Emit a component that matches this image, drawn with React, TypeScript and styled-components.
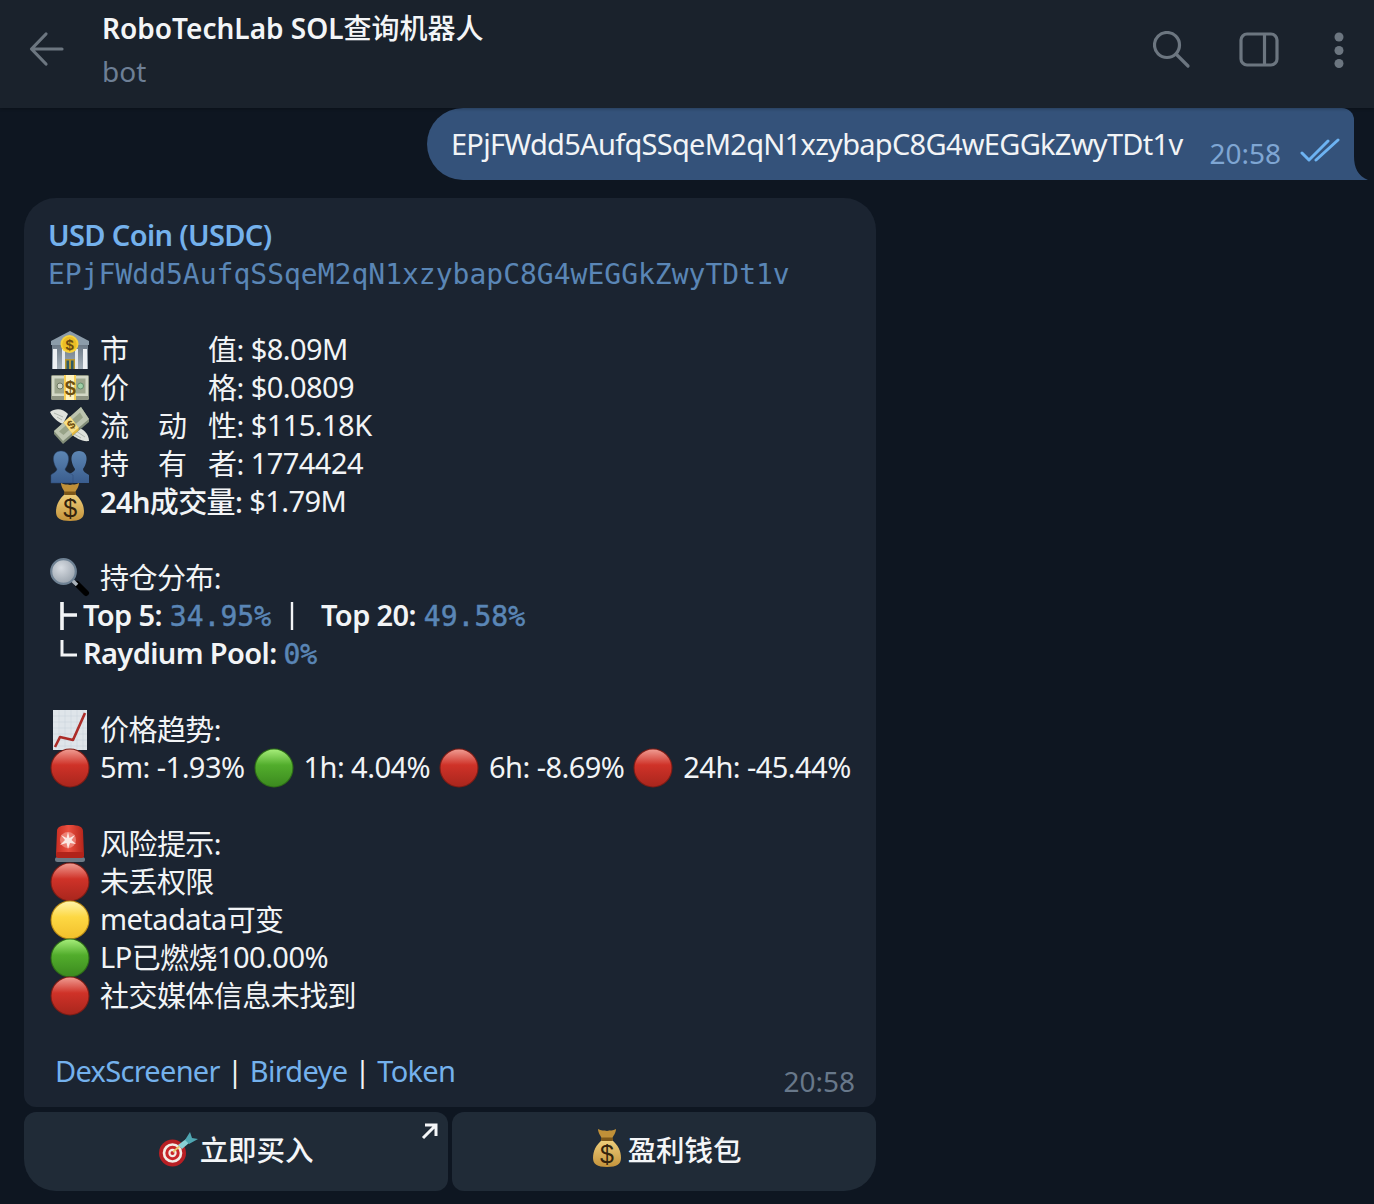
import { ReactNode } from 'react';
import styled, { createGlobalStyle } from 'styled-components';

const GlobalStyle = createGlobalStyle`
    html, body {
        margin: 0;
        padding: 0;
        background: #0e1621;
    }
    body {
        font-family: "Noto Sans", "Noto Sans CJK SC", sans-serif;
        color: #f2f4f6;
    }
`;

type BallKind = 'red' | 'green' | 'yellow';

const ballColors: Record<BallKind, [string, string, string, string]> = {
    red: ['#ef9a90', '#cf3228', '#a9261d', '#7d1c15'],
    green: ['#a4ec78', '#52ad2c', '#3c8a1f', '#2d6c17'],
    yellow: ['#fff3a8', '#fdd843', '#f2c02c', '#b98a14'],
};

function Ball({ kind }: { kind: BallKind }) {
    const [a, b, c, d] = ballColors[kind];
    const id = `ball-${kind}`;
    return (
        <svg viewBox="0 0 40 40" width="40" height="40">
            <defs>
                <linearGradient id={id} x1="0" y1="0" x2="0" y2="1">
                    <stop offset="0" stopColor={a} />
                    <stop offset="0.42" stopColor={b} />
                    <stop offset="1" stopColor={c} />
                </linearGradient>
            </defs>
            <circle cx="20" cy="20" r="19.5" fill={d} />
            <circle cx="20" cy="20" r="18.4" fill={`url(#${id})`} />
        </svg>
    );
}

function Bank() {
    return (
        <svg viewBox="0 0 40 40" width="40" height="40">
            <defs>
                <linearGradient id="bank-wall" x1="0" y1="0" x2="0" y2="1">
                    <stop offset="0" stopColor="#6d7a87" />
                    <stop offset="1" stopColor="#a5b1ba" />
                </linearGradient>
            </defs>
            <path d="M20 1 L39 11 V15 H1 V11 Z" fill="#8c9ca9" />
            <rect x="2" y="15" width="36" height="24" fill="url(#bank-wall)" />
            <rect x="3" y="19" width="4" height="20" fill="#eef1f3" />
            <rect x="12" y="19" width="3" height="20" fill="#e4e8eb" />
            <rect x="25" y="19" width="3" height="20" fill="#e4e8eb" />
            <rect x="33" y="19" width="4" height="20" fill="#eef1f3" />
            <rect x="15.500" y="30" width="9" height="9" fill="#2f5b66" />
            <path d="M15 29 h10 v10 h-1.500 v-8.500 h-2.500 v8.500 h-2 v-8.500 h-2.500 v8.500 h-1.500 Z" fill="#b9982f" />
            <circle cx="19.500" cy="14" r="9" fill="#f7d23c" />
            <circle cx="19.500" cy="14" r="7.200" fill="#ecbd25" />
            <text x="19.500" y="19.500" textAnchor="middle" fontSize="15" fontWeight="700" fontFamily="Liberation Sans, sans-serif" fill="#6b4c10">$</text>
        </svg>
    );
}

function Banknotes() {
    return (
        <svg viewBox="0 0 40 40" width="40" height="40">
            <rect x="1" y="7" width="38" height="25" rx="1.500" fill="#8f9583" />
            <rect x="2" y="8" width="36" height="20" fill="#d3d8c6" />
            <rect x="4.500" y="10.500" width="31" height="15" fill="#9ea78e" />
            <circle cx="10" cy="18" r="3" fill="#d3d8c6" stroke="#6f7963" />
            <circle cx="30.500" cy="18" r="3" fill="#9ed0a6" stroke="#628d6b" />
            <rect x="14" y="7" width="12" height="25" fill="#f8cf55" />
            <rect x="16" y="7" width="8" height="25" fill="#fdf2c0" />
            <text x="20" y="26.500" textAnchor="middle" fontSize="20" fontWeight="700" fontFamily="Liberation Sans, sans-serif" fill="#6f5010">$</text>
        </svg>
    );
}

function MoneyWings() {
    return (
        <svg viewBox="0 0 40 40" width="40" height="40">
            <path d="M0 6 C5 2 13 2 18 8 L13 18 C8 16 3 12 0 6 Z" fill="#dfe2dc" />
            <path d="M4 7 L13 11 M7 11 L12 14" stroke="#a5ada3" strokeWidth="0.800" fill="none" />
            <path d="M39 35 C39 28 33 22 26 21 L21 28 C26 32 32 36 39 35 Z" fill="#dfe2dc" />
            <path d="M35 31 L26 25 M31 32 L24 28" stroke="#a5ada3" strokeWidth="0.800" fill="none" />
            <path d="M4 25 L31 1 L39 13 L39 16 L13 38 L4 28 Z" fill="#828d78" />
            <path d="M4 25 L31 1 L39 13 L13 35 Z" fill="#bcc4af" />
            <path d="M9 25.500 L30 6.500 L33 11.500 L13.500 29 Z" fill="#98a388" />
            <path d="M13.500 16.600 L20 10.600 L28.600 21.800 L28.600 24.500 L22 30 L22 27.300 Z" fill="#e4b93f" />
            <path d="M13.500 16.600 L20 10.600 L28.600 21.800 L22 27.300 Z" fill="#f9df85" />
            <text x="21" y="23" textAnchor="middle" fontSize="12" fontWeight="700" fontFamily="Liberation Sans, sans-serif" fill="#6f5010" transform="rotate(-40 21 19)">$</text>
        </svg>
    );
}

function Busts() {
    return (
        <svg viewBox="0 0 40 40" width="40" height="40">
            <defs>
                <linearGradient id="bust-fill" x1="0" y1="0" x2="0" y2="1">
                    <stop offset="0" stopColor="#5d86b3" />
                    <stop offset="1" stopColor="#3a5d8e" />
                </linearGradient>
            </defs>
            <path d="M29 7 C23.500 7 21 11 21.500 16 C22 20 23.500 23 25 25 C25 27.500 21 29 17 31 V39 H39 V31 C35.500 29 33 27.500 33 25 C34.500 23 36 20 36.500 16 C37 11 34.500 7 29 7 Z" fill="url(#bust-fill)" />
            <path d="M11 7 C5.500 7 3 11 3.500 16 C4 20 5.500 23 7 25 C7 27.500 3.500 29 1 31 V39 H23 V31 C19.500 29 15 27.500 15 25 C16.500 23 18 20 18.500 16 C19 11 16.500 7 11 7 Z" fill="url(#bust-fill)" stroke="#2c4a75" strokeWidth="0.500" />
        </svg>
    );
}

function MoneyBag() {
    return (
        <svg viewBox="0 0 40 40" width="40" height="40">
            <defs>
                <linearGradient id="bag-fill" x1="0" y1="0" x2="0" y2="1">
                    <stop offset="0" stopColor="#efcf7c" />
                    <stop offset="1" stopColor="#c4933b" />
                </linearGradient>
            </defs>
            <path d="M11 1 C14 3 17 2 20 3 C23 2 26 3 29 1 C29 5 26 8 25 11 H15 C14 8 11 5 11 1 Z" fill="#c09038" />
            <path d="M15 12 C9 17 6 23 6 30 C6 36 10 39 20 39 C30 39 34 36 34 30 C34 23 31 17 25 12 Z" fill="url(#bag-fill)" />
            <rect x="14" y="9.500" width="12" height="3.500" rx="1.500" fill="#7d5719" />
            <text x="20" y="35" textAnchor="middle" fontSize="25" fontWeight="400" fontFamily="Liberation Sans, sans-serif" fill="#33230d">$</text>
        </svg>
    );
}

function Magnifier() {
    return (
        <svg viewBox="0 0 40 40" width="40" height="40">
            <defs>
                <radialGradient id="lens-fill" cx="0.4" cy="0.35" r="0.8">
                    <stop offset="0" stopColor="#d8dde3" />
                    <stop offset="1" stopColor="#8e98a3" />
                </radialGradient>
            </defs>
            <path d="M27 26 L36 35" stroke="#000" strokeWidth="6" strokeLinecap="round" />
            <path d="M22 22 L27 27" stroke="#aab2ba" strokeWidth="3.500" />
            <circle cx="13.500" cy="13.500" r="12.300" fill="url(#lens-fill)" stroke="#6f8294" strokeWidth="2.200" />
        </svg>
    );
}

function ChartUp() {
    return (
        <svg viewBox="0 0 40 40" width="40" height="40">
            <rect x="3" y="0" width="34" height="40" fill="#dfe5ea" />
            <path d="M3 6 H37 M3 12 H37 M3 18 H37 M3 24 H37 M3 30 H37 M3 36 H37 M9 0 V40 M15 0 V40 M21 0 V40 M27 0 V40 M33 0 V40" stroke="#c7d0d8" strokeWidth="0.500" fill="none" />
            <path d="M5 37 L10 27 L23 30 L35 3" stroke="#ac2c28" strokeWidth="2.600" fill="none" strokeLinejoin="round" />
        </svg>
    );
}

function Siren() {
    return (
        <svg viewBox="0 0 40 40" width="40" height="40">
            <defs>
                <linearGradient id="siren-fill" x1="0" y1="0" x2="1" y2="0">
                    <stop offset="0" stopColor="#c92d22" />
                    <stop offset="0.45" stopColor="#ea5040" />
                    <stop offset="1" stopColor="#b4241a" />
                </linearGradient>
            </defs>
            <path d="M6 31 L7 7 C7 3 11 1 20 1 C29 1 33 3 33 7 L34 31 Z" fill="url(#siren-fill)" />
            <circle cx="18" cy="16" r="8" fill="#f7a79c" opacity="0.6" />
            <path d="M18 8 L19.500 14 L25 11 L21.500 16 L26 20 L20 19 L18 25 L16.500 19 L10 21 L15 16 L11 11 L16.500 14 Z" fill="#fbe8e3" />
            <rect x="5" y="33" width="30" height="5" rx="2.500" fill="#6c7a86" />
            <rect x="6" y="28" width="28" height="6" rx="2" fill="#b1231a" />
        </svg>
    );
}

function Dart() {
    return (
        <svg viewBox="0 0 40 40" width="40" height="40">
            <circle cx="13.500" cy="25" r="13.500" fill="#b81f24" />
            <circle cx="13.500" cy="25" r="9.800" fill="#f3ece6" />
            <circle cx="13.500" cy="25" r="7.200" fill="#c9252a" />
            <circle cx="13.500" cy="25" r="4.200" fill="#f3ece6" />
            <circle cx="13.500" cy="25" r="2" fill="#c9252a" />
            <path d="M14 24 L22 17" stroke="#e8c66a" strokeWidth="1.800" />
            <path d="M19 17 L27 11 L30 15 L23 21 Z" fill="#8ad0d6" />
            <path d="M26 12 L31 4 L33 10 L39 11 L30 16 Z" fill="#4fa6b2" />
        </svg>
    );
}

const PageShell = styled.div`
    width: 1374px;
    height: 1204px;
    display: flex;
    flex-direction: column;
    overflow: hidden;
    background: #0e1621;
`;

const TopBar = styled.header`
    position: relative;
    z-index: 1;
    height: 108px;
    flex: none;
    box-sizing: border-box;
    display: flex;
    align-items: center;
    padding: 0 29px 10px 28px;
    background: #1a222c;
    box-shadow: 0 1px 3px rgba(0, 0, 0, 0.25);
`;

const BackIcon = styled.svg`
    width: 38px;
    height: 38px;
    margin-right: 36px;
    flex: none;
`;

const TitleBlock = styled.div`
    flex: 1;
    display: flex;
    flex-direction: column;
    gap: 3px;
`;

const Title = styled.div`
    font-size: 28px;
    line-height: 40px;
    font-weight: 600;
    color: #f3f5f7;
`;

const Medium = styled.span`
    font-weight: 500;
`;

const Subtitle = styled.div`
    font-size: 28px;
    line-height: 40px;
    color: #6d7f95;
`;

const TopIcon = styled.svg<{ $gap: number }>`
    flex: none;
    margin: 2px 0 0 ${(p) => p.$gap}px;
`;

const Thread = styled.main`
    flex: 1;
    display: flex;
    flex-direction: column;
`;

const OutgoingRow = styled.div`
    display: flex;
    justify-content: flex-end;
    padding-right: 20px;
`;

const OutgoingBubble = styled.div`
    position: relative;
    height: 72px;
    box-sizing: border-box;
    padding: 0 14px 0 24px;
    display: flex;
    align-items: flex-start;
    background: #34527a;
    border-radius: 36px 12px 0 36px;
`;

const BubbleTail = styled.svg`
    position: absolute;
    right: -14px;
    bottom: 0;
`;

const OutgoingText = styled.span`
    font-size: 29px;
    line-height: 72px;
    letter-spacing: -0.71px;
    color: #f2f4f6;
`;

const OutgoingTime = styled.span`
    font-size: 28px;
    line-height: 36px;
    margin: 27px 0 0 27px;
    color: #7fa6d3;
`;

const Ticks = styled.svg`
    margin: 30px 0 0 19px;
`;

const Incoming = styled.section`
    width: 852px;
    margin: 18px 0 0 24px;
`;

const Bubble = styled.article`
    position: relative;
    height: 909px;
    box-sizing: border-box;
    padding: 19px 0 0 24px;
    background: #1b2431;
    border-radius: 32px 32px 12px 12px;
`;

const Line = styled.div<{ $bold?: boolean }>`
    height: 38px;
    display: flex;
    align-items: center;
    font-size: 29px;
    line-height: 38px;
    white-space: pre;
    letter-spacing: ${(p) => (p.$bold ? '-0.62px' : '-0.55px')};
    font-weight: ${(p) => (p.$bold ? 600 : 400)};
    color: #f2f4f6;
`;

// latin text sits a pixel above the CJK glyphs on the same line
const Latin = styled.span`
    margin-bottom: 2px;
`;

const PlainLatin = styled(Latin)`
    font-weight: 400;
    letter-spacing: -0.55px;
`;

const TokenName = styled(Line)`
    color: #74b1ec;
    font-weight: 600;
    letter-spacing: -0.65px;
`;

const Mono = styled.span<{ $strong?: boolean }>`
    font-family: "DejaVu Sans Mono", monospace;
    font-size: 28px;
    letter-spacing: 0;
    margin-top: 2px;
    font-weight: 400;
    -webkit-text-stroke: ${(p) => (p.$strong ? '0.5px' : '0')};
    color: #5a86b6;
`;

const Emoji = styled.span`
    flex: none;
    width: 40px;
    height: 40px;
    margin: 0 10px 0 2px;
    display: block;
    & > svg {
        display: block;
    }
`;

const Tree = styled.span`
    flex: none;
    width: 23px;
    height: 38px;
    margin-left: 12px;
`;

const Gap = styled.span<{ $w: number }>`
    flex: none;
    width: ${(p) => p.$w}px;
`;

const Slot = styled.span<{ $w: number }>`
    flex: none;
    width: ${(p) => p.$w}px;
`;

const TextLink = styled.a`
    color: #74b1ec;
    text-decoration: none;
    letter-spacing: -0.7px;
`;

const Divider = styled.span`
    margin: 0 7.25px;
    color: #f2f4f6;
`;

const IncomingTime = styled.span`
    position: absolute;
    right: 21px;
    bottom: 8px;
    font-size: 28px;
    line-height: 36px;
    color: #68788a;
`;

const Keyboard = styled.div`
    display: flex;
    gap: 4px;
    margin-top: 5px;
`;

const KeyButton = styled.div<{ $side: 'left' | 'right' }>`
    position: relative;
    flex: 1;
    height: 79px;
    box-sizing: border-box;
    padding-bottom: 7px;
    display: flex;
    align-items: center;
    justify-content: center;
    gap: 1px;
    font-size: 28.5px;
    font-weight: 500;
    letter-spacing: -0.1px;
    color: #f4f6f8;
    background: #202b37;
    border-radius: ${(p) => (p.$side === 'left' ? '12px 12px 12px 32px' : '12px 12px 32px 12px')};
`;

const KeyArrow = styled.svg`
    position: absolute;
    top: 10px;
    right: 9px;
`;

const Blank = () => <Line />;

function Row({ icon, children }: { icon: ReactNode; children: ReactNode }) {
    return (
        <Line>
            <Emoji>{icon}</Emoji>
            {children}
        </Line>
    );
}

function Metric({ icon, a, b, c, value }: { icon: ReactNode; a: string; b?: string; c: string; value: string }) {
    return (
        <Line>
            <Emoji>{icon}</Emoji>
            <Slot $w={58}>{a}</Slot>
            <Slot $w={50}>{b}</Slot>
            <span>{c}:</span>
            <Latin> {value}</Latin>
        </Line>
    );
}

export default function App() {
    return (
        <PageShell>
            <GlobalStyle />
            <TopBar>
                <BackIcon viewBox="0 0 38 38" fill="none" stroke="#6c7680" strokeWidth="3.200" strokeLinecap="round" strokeLinejoin="round">
                    <path d="M34 19 H4 M18 4 L3.500 19 L18 34" />
                </BackIcon>
                <TitleBlock>
                    <Title>RoboTechLab SOL<Medium>查询机器人</Medium></Title>
                    <Subtitle>bot</Subtitle>
                </TitleBlock>
                <TopIcon $gap={0} width="38" height="38" viewBox="0 0 38 38" fill="none" stroke="#6c7680" strokeWidth="3.200" strokeLinecap="round">
                    <circle cx="14" cy="14" r="12.500" />
                    <path d="M23.500 23.500 L35 35" />
                </TopIcon>
                <TopIcon $gap={48} width="40" height="36" viewBox="0 0 40 36" fill="none" stroke="#6c7680" strokeWidth="3.200">
                    <rect x="2" y="2" width="36" height="31" rx="6" />
                    <path d="M25.500 2 V33" />
                </TopIcon>
                <TopIcon $gap={54} width="12" height="38" viewBox="0 0 12 38" fill="#6c7680">
                    <circle cx="6" cy="6" r="4.500" />
                    <circle cx="6" cy="19.500" r="4.500" />
                    <circle cx="6" cy="32.500" r="4.500" />
                </TopIcon>
            </TopBar>
            <Thread>
                <OutgoingRow>
                    <OutgoingBubble>
                        <OutgoingText>EPjFWdd5AufqSSqeM2qN1xzybapC8G4wEGGkZwyTDt1v</OutgoingText>
                        <OutgoingTime>20:58</OutgoingTime>
                        <Ticks width="40" height="26" viewBox="0 0 40 26" fill="none" stroke="#6db3f2" strokeWidth="3" strokeLinecap="round" strokeLinejoin="round">
                            <path d="M2 15 L9 22 L28 3" />
                            <path d="M16 22 L38 2" />
                        </Ticks>
                        <BubbleTail width="14" height="24" viewBox="0 0 14 24">
                            <path d="M0 0 C0 12 4 20 14 24 H0 Z" fill="#34527a" />
                        </BubbleTail>
                    </OutgoingBubble>
                </OutgoingRow>
                <Incoming>
                    <Bubble>
                        <TokenName><Latin>USD Coin (USDC)</Latin></TokenName>
                        <Line><Mono>EPjFWdd5AufqSSqeM2qN1xzybapC8G4wEGGkZwyTDt1v</Mono></Line>
                        <Blank />
                        <Metric icon={<Bank />} a="市" c="值" value="$8.09M" />
                        <Metric icon={<Banknotes />} a="价" c="格" value="$0.0809" />
                        <Metric icon={<MoneyWings />} a="流" b="动" c="性" value="$115.18K" />
                        <Metric icon={<Busts />} a="持" b="有" c="者" value="1774424" />
                        <Line $bold>
                            <Emoji><MoneyBag /></Emoji>
                            24h<Medium>成交量:</Medium>
                            <PlainLatin> $1.79M</PlainLatin>
                        </Line>
                        <Blank />
                        <Row icon={<Magnifier />}>持仓分布:</Row>
                        <Line $bold>
                            <Tree>
                                <svg width="20" height="38" viewBox="0 0 20 38" fill="none" stroke="#f2f4f6" strokeWidth="3.600">
                                    <path d="M2 5 V33 M2 18 H17" />
                                </svg>
                            </Tree>
                            <Latin>Top 5: </Latin>
                            <Gap $w={1} />
                            <Mono $strong>34.95%</Mono>
                            <Gap $w={18} />
                            <svg width="6" height="28" viewBox="0 0 6 28" fill="none" stroke="#f2f4f6" strokeWidth="2.400"><path d="M3 0 V28" /></svg>
                            <Gap $w={26} />
                            <Latin>Top 20: </Latin>
                            <Gap $w={1} />
                            <Mono $strong>49.58%</Mono>
                        </Line>
                        <Line $bold>
                            <Tree>
                                <svg width="20" height="38" viewBox="0 0 20 38" fill="none" stroke="#f2f4f6" strokeWidth="3">
                                    <path d="M2 5 V20 H17" />
                                </svg>
                            </Tree>
                            <Latin>Raydium Pool: </Latin>
                            <Mono $strong>0%</Mono>
                        </Line>
                        <Blank />
                        <Row icon={<ChartUp />}>价格趋势:</Row>
                        <Line>
                            <Emoji><Ball kind="red" /></Emoji>
                            <Latin>5m: -1.93%</Latin>
                            <Gap $w={7} />
                            <Emoji><Ball kind="green" /></Emoji>
                            <Latin>1h: 4.04%</Latin>
                            <Gap $w={7} />
                            <Emoji><Ball kind="red" /></Emoji>
                            <Latin>6h: -8.69%</Latin>
                            <Gap $w={7} />
                            <Emoji><Ball kind="red" /></Emoji>
                            <Latin>24h: -45.44%</Latin>
                        </Line>
                        <Blank />
                        <Row icon={<Siren />}>风险提示:</Row>
                        <Row icon={<Ball kind="red" />}>未丢权限</Row>
                        <Row icon={<Ball kind="yellow" />}><Latin>metadata</Latin>可变</Row>
                        <Row icon={<Ball kind="green" />}><Latin>LP</Latin>已燃烧<Latin>100.00%</Latin></Row>
                        <Row icon={<Ball kind="red" />}>社交媒体信息未找到</Row>
                        <Blank />
                        <Line>
                            <Gap $w={7} />
                            <Latin><TextLink>DexScreener</TextLink></Latin>
                            <Latin><Divider>|</Divider></Latin>
                            <Latin><TextLink>Birdeye</TextLink></Latin>
                            <Latin><Divider>|</Divider></Latin>
                            <Latin><TextLink>Token</TextLink></Latin>
                        </Line>
                        <IncomingTime>20:58</IncomingTime>
                    </Bubble>
                    <Keyboard>
                        <KeyButton $side="left">
                            <Dart />
                            立即买入
                            <KeyArrow width="18" height="18" viewBox="0 0 18 18" fill="none" stroke="#f4f6f8" strokeWidth="3">
                                <path d="M2 16 L14 4 M4 3 H15 V14" />
                            </KeyArrow>
                        </KeyButton>
                        <KeyButton $side="right">
                            <MoneyBag />
                            盈利钱包
                        </KeyButton>
                    </Keyboard>
                </Incoming>
            </Thread>
        </PageShell>
    );
}
